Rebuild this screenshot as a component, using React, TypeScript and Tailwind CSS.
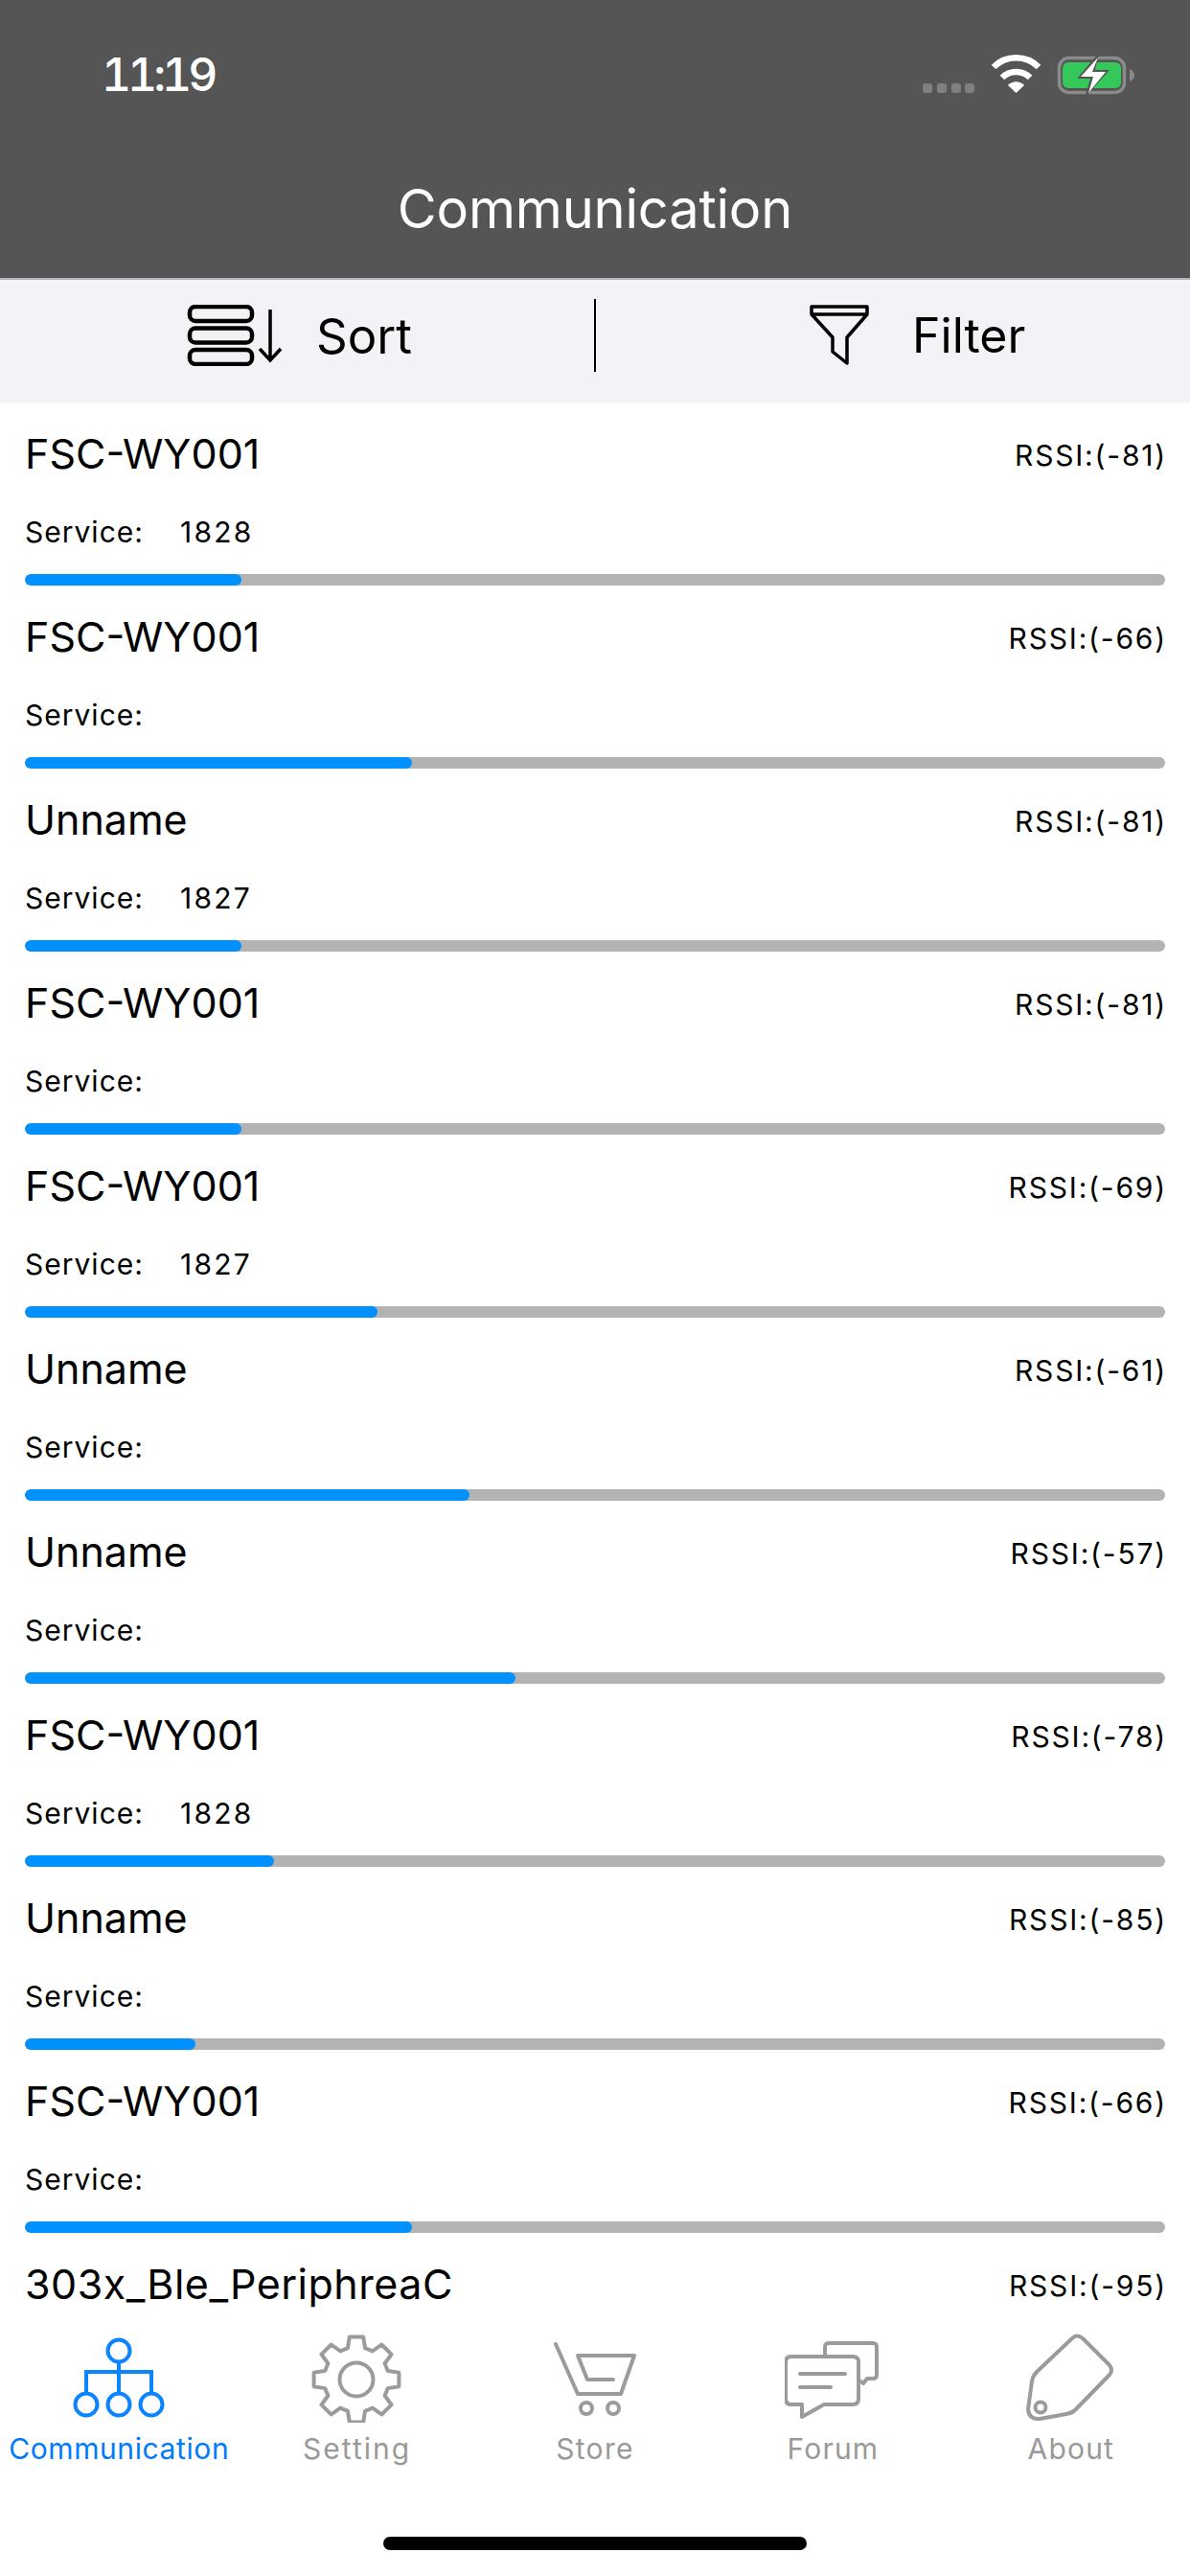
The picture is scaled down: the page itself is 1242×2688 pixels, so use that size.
const rows = [
  { name: "FSC-WY001", rssi: -81, service: "1828", fill: 226 },
  { name: "FSC-WY001", rssi: -66, service: "", fill: 404 },
  { name: "Unname", rssi: -81, service: "1827", fill: 226 },
  { name: "FSC-WY001", rssi: -81, service: "", fill: 226 },
  { name: "FSC-WY001", rssi: -69, service: "1827", fill: 368 },
  { name: "Unname", rssi: -61, service: "", fill: 464 },
  { name: "Unname", rssi: -57, service: "", fill: 512 },
  { name: "FSC-WY001", rssi: -78, service: "1828", fill: 260 },
  { name: "Unname", rssi: -85, service: "", fill: 178 },
  { name: "FSC-WY001", rssi: -66, service: "", fill: 404 },
];

function gearPath(cx: number, cy: number) {
  const teeth = 8;
  const pts: string[] = [];
  for (let i = 0; i < teeth; i++) {
    const a = (i * Math.PI * 2) / teeth - Math.PI / 2;
    const at = (r: number, d: number) => {
      const x = cx + r * Math.cos(a + d);
      const y = cy + r * Math.sin(a + d);
      return `${x.toFixed(1)} ${y.toFixed(1)}`;
    };
    pts.push(at(34, -0.27), at(45, -0.16), at(45, 0.16), at(34, 0.27));
  }
  return "M" + pts.join("L") + "Z";
}

function CommIcon() {
  return (
    <svg width="100" height="96" viewBox="72 2432 100 96" fill="none" stroke="#0a84ff" strokeWidth="4">
      <circle cx="122" cy="2453" r="11.5" />
      <path d="M122 2465V2497M88 2497V2475H156V2497" />
      <circle cx="88" cy="2509" r="11.5" />
      <circle cx="122" cy="2509" r="11.5" />
      <circle cx="156" cy="2509" r="11.5" />
    </svg>
  );
}

function GearIcon() {
  return (
    <svg width="100" height="96" viewBox="322 2432 100 96" fill="none" stroke="#9b9b9b" strokeWidth="4" strokeLinejoin="round">
      <path d={gearPath(371, 2483)} />
      <circle cx="371" cy="2483" r="17.5" />
    </svg>
  );
}

function CartIcon() {
  return (
    <svg width="100" height="96" viewBox="571 2432 100 96" fill="none" stroke="#9b9b9b" strokeWidth="4" strokeLinecap="round" strokeLinejoin="round">
      <path d="M580 2446L603 2498H648L662 2458H603L613 2483H640" />
      <circle cx="612" cy="2513" r="6" />
      <circle cx="640" cy="2513" r="6" />
    </svg>
  );
}

function ForumIcon() {
  return (
    <svg width="100" height="96" viewBox="819 2432 100 96" fill="none" stroke="#9b9b9b" strokeWidth="4" strokeLinecap="round" strokeLinejoin="round">
      <path d="M826 2459H890Q896 2459 896 2465V2503Q896 2509 890 2509H860L837 2522V2509H826Q820 2509 820 2503V2465Q820 2459 826 2459Z" />
      <path d="M861 2458V2449Q861 2445 865 2445H911Q915 2445 915 2449V2478Q915 2482 911 2482H905L901 2487L897 2484" />
      <path d="M835 2477H882M835 2491H867" />
    </svg>
  );
}

function TagIcon() {
  return (
    <svg width="100" height="96" viewBox="1067 2432 100 96" fill="none" stroke="#9b9b9b" strokeWidth="4" strokeLinejoin="round">
      <path d="M1118 2440Q1123 2435 1129 2440L1157 2468Q1161 2473 1157 2478L1122 2514Q1118 2518 1112 2519L1084 2524Q1073 2525 1072 2514L1076 2485Q1077 2479 1081 2475Z" />
      <circle cx="1085" cy="2512" r="5.5" />
    </svg>
  );
}

const tabs = [
  { label: "Communication", Icon: CommIcon, cls: "text-[#007aff] tracking-[0.6px]" },
  { label: "Setting", Icon: GearIcon, cls: "text-[#999999] tracking-[2px]" },
  { label: "Store", Icon: CartIcon, cls: "text-[#999999] tracking-[1.3px]" },
  { label: "Forum", Icon: ForumIcon, cls: "text-[#999999] tracking-[1.2px]" },
  { label: "About", Icon: TagIcon, cls: "text-[#999999] tracking-[1.2px]" },
];

export default function App() {
  return (
    <div className="flex h-[2688px] w-[1242px] flex-col overflow-hidden bg-white font-['Inter','Liberation_Sans',sans-serif] text-black">
      <header className="h-[290px] shrink-0 bg-[#555555] text-white">
        <div className="flex h-[156px] items-center justify-between pl-[106px] pr-[58px]">
          <span className="text-[48px] font-medium leading-none tracking-[-4px] tabular-nums">11:19</span>
          <svg width="221" height="44" viewBox="963 56 221 44" fill="none">
            <rect x="963" y="87" width="10" height="10" rx="3" fill="#808080" />
            <rect x="978" y="87" width="10" height="10" rx="3" fill="#808080" />
            <rect x="993" y="87" width="10" height="10" rx="3" fill="#808080" />
            <rect x="1007" y="87" width="10" height="10" rx="3" fill="#808080" />
            <path d="M1037 70C1050 57 1071 57 1084 70" stroke="#fff" strokeWidth="6.5" />
            <path d="M1046 81C1054 73 1067 73 1075 81" stroke="#fff" strokeWidth="6.5" />
            <path d="M1052 89C1057 84 1064 84 1069 89L1060.5 97Z" fill="#fff" />
            <rect x="1105.5" y="60.5" width="68" height="36" rx="10" stroke="#8a8a8a" strokeWidth="3.5" />
            <rect x="1109" y="65" width="61" height="27" rx="6" fill="#34c759" />
            <path d="M1179 72C1182 73 1184 76 1184 78.500C1184 81 1182 84 1179 85Z" fill="#8a8a8a" />
            <path d="M1147 55L1124 82H1138L1132 102L1158 73H1143Z" fill="#555555" />
            <path d="M1146 60L1128 80H1141L1136 97L1154 75H1140Z" fill="#fff" />
          </svg>
        </div>
        <h1 className="flex h-[124px] items-center justify-center text-[56px] font-normal leading-none tracking-[-0.2px]">
          Communication
        </h1>
      </header>

      <div className="flex h-[130px] shrink-0 items-center border-t-2 border-[#b4b4b8] bg-[#f2f2f7] pb-[12px]">
        <div className="flex w-[620px] shrink-0 items-center gap-[12px] pl-[194px]">
          <svg width="124" height="64" viewBox="192 318 124 64" fill="none" stroke="#000">
            <rect x="196" y="320" width="65" height="15" rx="6" strokeWidth="4.500" />
            <rect x="196" y="342.500" width="65" height="15" rx="6" strokeWidth="4.500" />
            <rect x="196" y="365" width="65" height="15" rx="6" strokeWidth="4.500" />
            <path d="M280 323V376M269 364L280 376L291 364" strokeWidth="3.500" />
          </svg>
          <span className="text-[51px] leading-none">Sort</span>
        </div>
        <div className="h-[76px] w-[2px] shrink-0 bg-black" />
        <div className="flex w-[620px] shrink-0 items-center gap-[44px] pl-[222px]">
          <svg width="64" height="64" viewBox="843 318 64 64" fill="none" stroke="#000" strokeWidth="3.500" strokeLinejoin="round">
            <path d="M846 320H904V328H846Z" />
            <path d="M846 328L868 352V367L883 379V352L904 328" />
          </svg>
          <span className="text-[50px] leading-none">Filter</span>
        </div>
      </div>

      <main className="min-h-0 flex-1 overflow-hidden">
        {rows.map((row, i) => (
          <div key={i} className="flex h-[191px] flex-col px-[26px]">
            <div className="flex h-[106px] shrink-0 items-center justify-between">
              <span className="text-[43px] leading-none">{row.name}</span>
              <span className="-mr-[2px] pt-[3px] text-[30px] leading-none tracking-[1.8px]">RSSI:({row.rssi})</span>
            </div>
            <div className="flex h-[56px] shrink-0 items-center pt-[1px] text-[30px] leading-none">
              <span className="w-[162px] tracking-[1px]">Service:</span>
              <span className="tracking-[2.2px]">{row.service}</span>
            </div>
            <div className="mt-[17px] h-[12px] shrink-0 overflow-hidden rounded-full bg-[#b3b3b3]">
              <div className="h-full rounded-full bg-[#0091ff]" style={{ width: row.fill }} />
            </div>
          </div>
        ))}
        <div className="flex h-[80px] items-start justify-between px-[26px] pt-[32px]">
          <span className="text-[43px] leading-none tracking-[0.5px]">303x_Ble_PeriphreaC</span>
          <span className="-mr-[2px] pt-[8px] text-[30px] leading-none tracking-[1.8px]">RSSI:(-95)</span>
        </div>
      </main>

      <nav className="flex h-[278px] shrink-0 flex-col bg-white">
        <div className="flex pt-[22px]">
          {tabs.map(({ label, Icon, cls }) => (
            <div key={label} className="flex flex-1 flex-col items-center">
              <Icon />
              <span className={`mt-[12px] text-[30px] leading-none ${cls}`}>{label}</span>
            </div>
          ))}
        </div>
        <div className="mt-auto mb-[27px] h-[14px] w-[442px] self-center rounded-full bg-black" />
      </nav>
    </div>
  );
}
